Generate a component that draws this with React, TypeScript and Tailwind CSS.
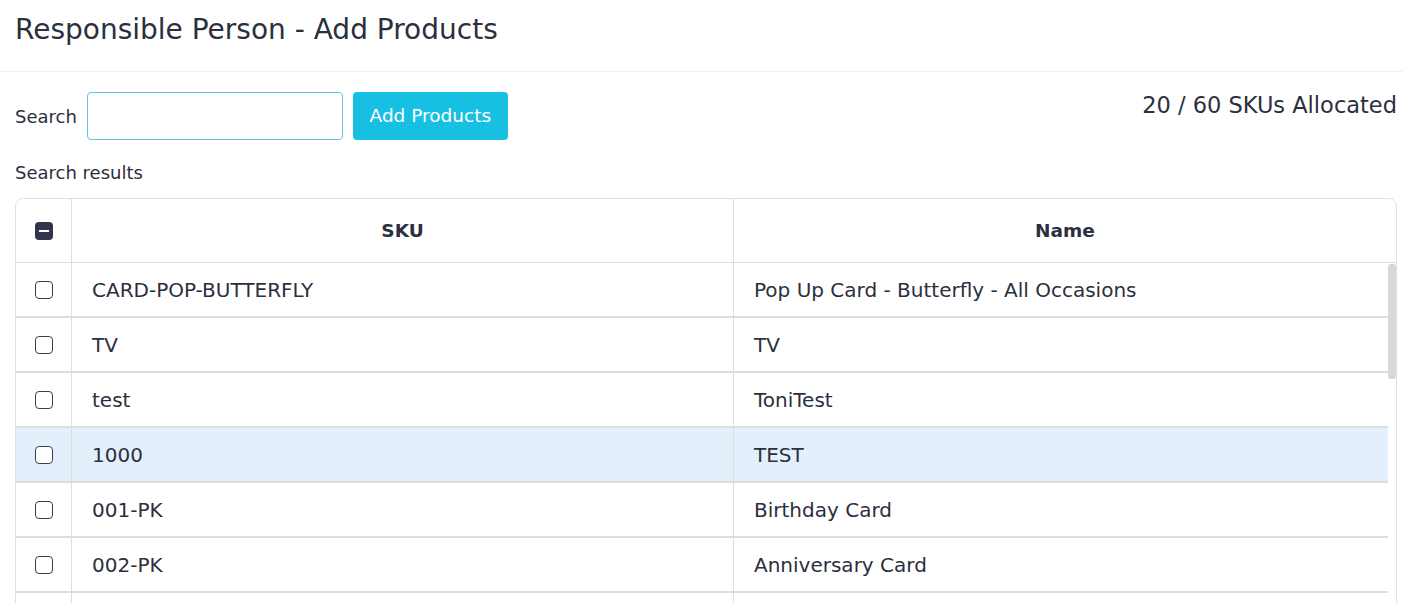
import React from 'react';

const rows = [
  { sku: 'CARD-POP-BUTTERFLY', name: 'Pop Up Card - Butterfly - All Occasions' },
  { sku: 'TV', name: 'TV' },
  { sku: 'test', name: 'ToniTest' },
  { sku: '1000', name: 'TEST', active: true },
  { sku: '001-PK', name: 'Birthday Card' },
  { sku: '002-PK', name: 'Anniversary Card' },
];

const Checkbox = () => (
  <span className="block w-[18px] h-[18px] rounded-[4px] border border-[#3b3e4f] bg-white" />
);

const App = () => {
  return (
    <div className="h-screen overflow-hidden bg-white text-[#2c2f3e] font-['DejaVu_Sans',sans-serif]">
      {/* Page title */}
      <div className="h-[72px] flex items-center pl-[15px] pr-[6px] border-b border-[#f0f0f2]">
        <h1 className="text-[28px] leading-none pb-[12px]">Responsible Person - Add Products</h1>
      </div>

      <div className="pl-[15px] pr-[6px] pt-[20px]">
        {/* Search row */}
        <div className="flex items-start justify-between">
          <div className="flex items-center">
            <label className="text-[18px] mr-[10px]">Search</label>
            <input className="w-[256px] h-[48px] rounded-[4px] border border-[#5ec4e0] outline-none px-3 text-[17px]" />
            <button className="ml-[10px] w-[155px] h-[48px] rounded-[4px] bg-[#17c0e3] text-white text-[18.5px]">
              Add Products
            </button>
          </div>
          <div className="text-[22.5px] leading-none pt-[2px]">20 / 60 SKUs Allocated</div>
        </div>

        <div className="text-[18px] mt-[20px] leading-[26px]">Search results</div>

        {/* Results table */}
        <div className="mt-[12px] border border-[#dedfe2] rounded-t-[8px] overflow-hidden">
          <div className="flex h-[64px] border-b border-[#dedfe2]">
            <div className="w-[56px] shrink-0 flex items-center justify-center border-r border-[#dedfe2]">
              <span className="w-[18px] h-[18px] rounded-[4px] bg-[#33364a] flex items-center justify-center">
                <span className="w-[10px] h-[2px] bg-white" />
              </span>
            </div>
            <div className="w-[662px] shrink-0 flex items-center justify-center font-bold text-[18.5px] border-r border-[#dedfe2]">SKU</div>
            <div className="flex-1 flex items-center justify-center font-bold text-[18.5px]">Name</div>
          </div>

          <div className="flex h-[400px]">
            <div className="flex-1 overflow-hidden">
              {rows.map((r) => (
                <div
                  key={r.sku}
                  className={`flex h-[55px] border-b-2 border-[#dcdddf] ${r.active ? 'bg-[#e3f0fc]' : 'bg-white'}`}
                >
                  <div className="w-[56px] shrink-0 flex items-center justify-center border-r border-[#dedfe2]">
                    <Checkbox />
                  </div>
                  <div className="w-[662px] shrink-0 flex items-center pl-[20px] text-[20px] border-r border-[#dedfe2]">{r.sku}</div>
                  <div className="flex-1 flex items-center pl-[20px] text-[20px]">{r.name}</div>
                </div>
              ))}
              <div className="flex h-[55px] border-b-2 border-[#dcdddf]">
                <div className="w-[56px] shrink-0 border-r border-[#dedfe2]" />
                <div className="w-[662px] shrink-0 border-r border-[#dedfe2]" />
                <div className="flex-1" />
              </div>
            </div>
            {/* scrollbar */}
            <div className="w-[8px] shrink-0 pt-[1px]">
              <div className="h-[115px] rounded-[3px] bg-[#d8d8d8]" />
            </div>
          </div>
        </div>
      </div>
    </div>
  );
};

export default App;
